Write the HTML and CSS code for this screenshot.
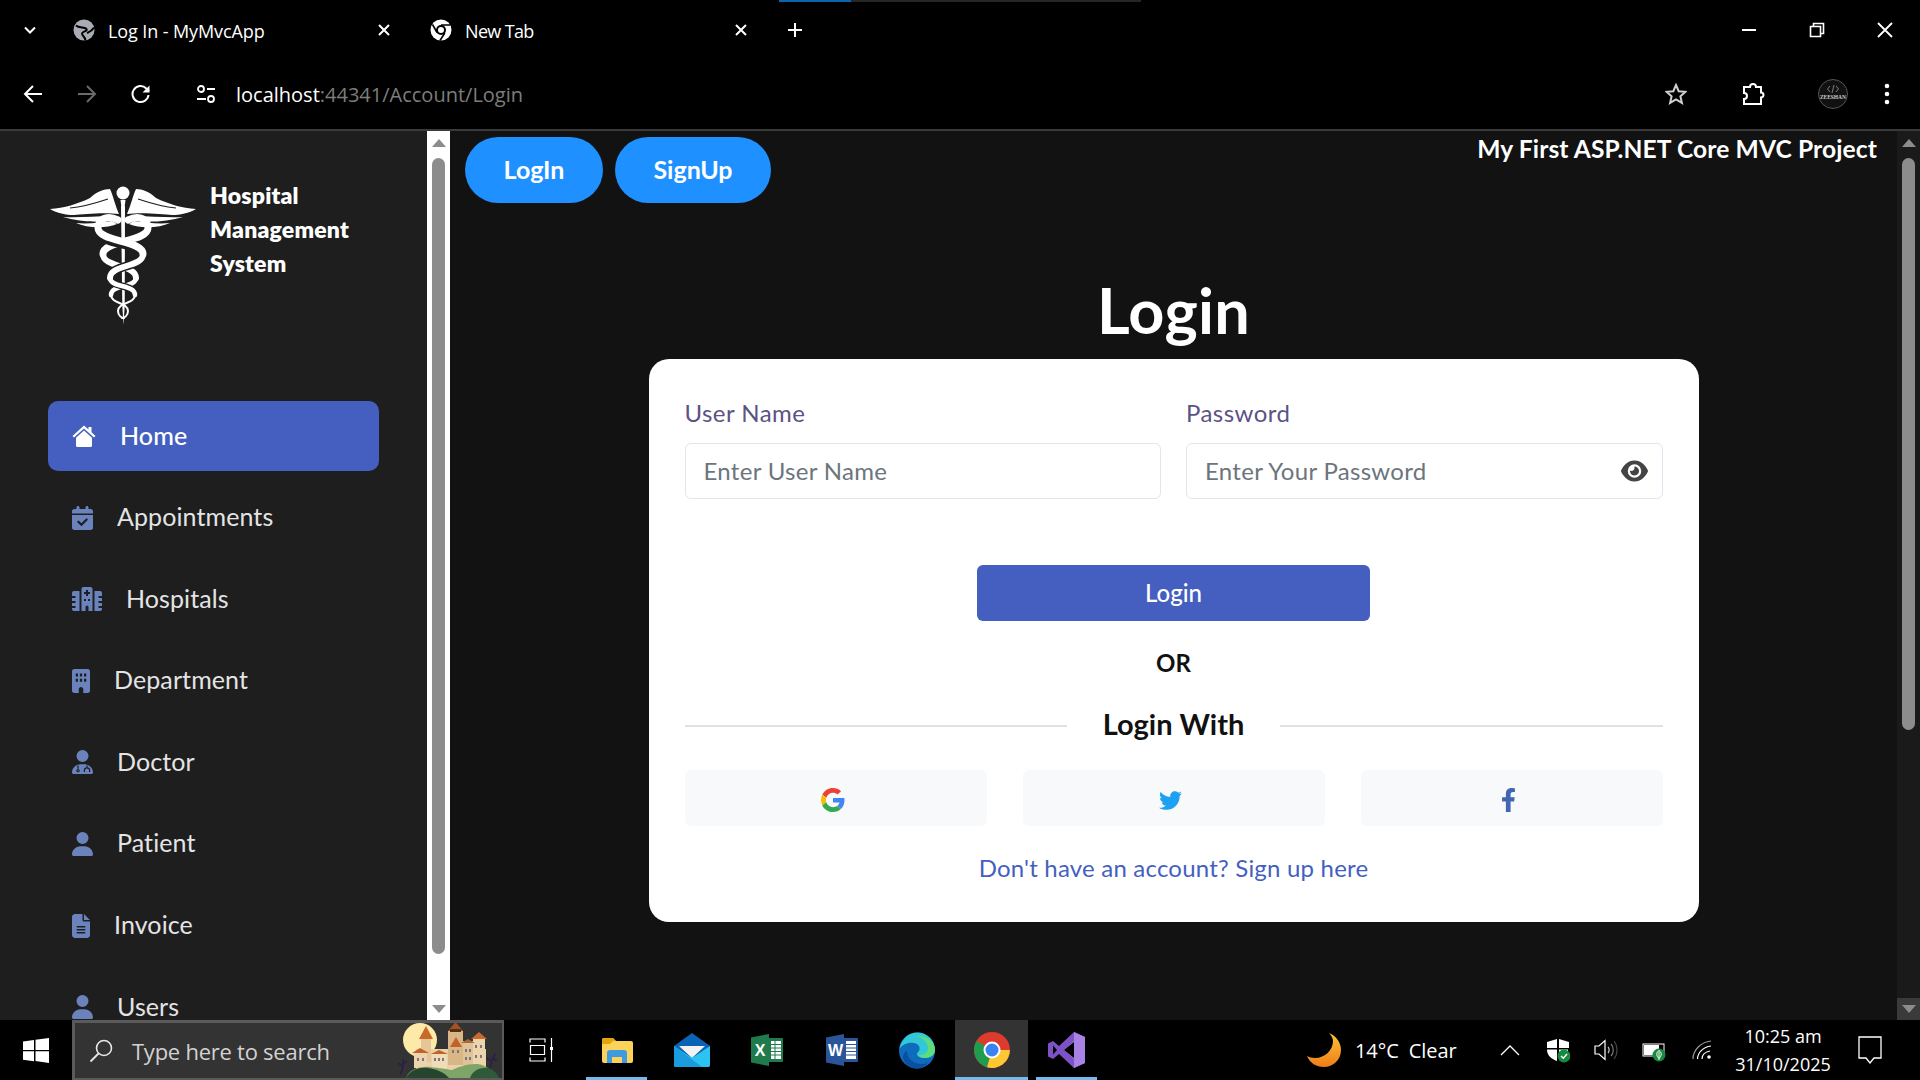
FILE: index.html
```html
<!DOCTYPE html>
<html lang="en">
<head>
<meta charset="utf-8">
<title>Log In - MyMvcApp</title>
<link rel="stylesheet" href="styles.css">
</head>
<body>
<header class="browser">
  <div class="progress"><div class="progress-fill"></div></div>
  <div class="tabstrip">
    <span class="tab-menu"><svg width="14" height="14" viewBox="0 0 14 14"><path d="M2 4.500l5 5 5-5" fill="none" stroke="#fff" stroke-width="2"/></svg></span>
    <div class="tab tab-first">
      <svg class="fav" width="22" height="22" viewBox="0 0 22 22"><circle cx="11" cy="11" r="10.500" fill="#a9adb3"/><path d="M3 6.500c3 3 9 1 10.500 3.500S9 12 9 14.500s3 2.500 3.500 7" fill="none" stroke="#000" stroke-width="2"/><path d="M14 14c2-1 5-2 7-5.500" fill="none" stroke="#000" stroke-width="2"/></svg>
      <span class="tab-title">Log In - MyMvcApp</span>
      <svg class="tab-x" width="14" height="14" viewBox="0 0 14 14"><path d="M2 2l10 10M12 2L2 12" stroke="#fff" stroke-width="2"/></svg>
    </div>
    <div class="tab tab-second">
      <svg class="fav" width="22" height="22" viewBox="0 0 22 22"><circle cx="11" cy="11" r="10.500" fill="#fff"/><circle cx="11" cy="11" r="5" fill="#000"/><circle cx="11" cy="11" r="3" fill="#fff"/><path d="M11 6h9.500M7 13.500L2.500 5.500M14.800 14L10 21.500" stroke="#000" stroke-width="1.600"/></svg>
      <span class="tab-title tab-title-short">New Tab</span>
      <svg class="tab-x" width="14" height="14" viewBox="0 0 14 14"><path d="M2 2l10 10M12 2L2 12" stroke="#fff" stroke-width="2"/></svg>
    </div>
    <svg class="tab-plus" width="16" height="16" viewBox="0 0 16 16"><path d="M8 1v14M1 8h14" stroke="#fff" stroke-width="2"/></svg>
    <div class="win-controls">
      <svg width="16" height="16" viewBox="0 0 16 16"><path d="M1 8h14" stroke="#fff" stroke-width="2"/></svg>
      <svg width="16" height="16" viewBox="0 0 16 16"><path d="M1.500 4.500h10v10h-10zM4.500 4V1.500h10v10H12" fill="none" stroke="#fff" stroke-width="1.600"/></svg>
      <svg width="16" height="16" viewBox="0 0 16 16"><path d="M1 1l14 14M15 1L1 15" stroke="#fff" stroke-width="1.800"/></svg>
    </div>
  </div>
  <div class="toolbar">
    <svg class="tb-back" width="20" height="20" viewBox="0 0 20 20"><path d="M19 10H2M10 2l-8 8 8 8" fill="none" stroke="#fff" stroke-width="2"/></svg>
    <svg class="tb-forward" width="20" height="20" viewBox="0 0 20 20"><path d="M1 10h17M10 2l8 8-8 8" fill="none" stroke="#6a6a6a" stroke-width="2"/></svg>
    <svg class="tb-reload" width="20" height="20" viewBox="0 0 20 20"><path d="M17.500 11a8 8 0 1 1-2.200-6.500L18 7" fill="none" stroke="#fff" stroke-width="2"/><path d="M18.500 1.500v7h-7z" fill="#fff"/></svg>
    <svg class="tb-tune" width="20" height="20" viewBox="0 0 20 20"><circle cx="5" cy="5" r="3" fill="none" stroke="#fff" stroke-width="1.800"/><path d="M11 5h8M1 15h9" stroke="#fff" stroke-width="1.800"/><circle cx="15" cy="15" r="3" fill="none" stroke="#fff" stroke-width="1.800"/></svg>
    <div class="url"><span class="url-host">localhost</span><span class="url-rest">:44341/Account/Login</span></div>
    <div class="tb-right">
      <svg class="tb-star" width="22" height="22" viewBox="0 0 22 22"><path d="M11 2l2.700 6.200 6.800.6-5.100 4.500 1.500 6.600L11 16.400l-5.900 3.500 1.500-6.600L1.500 8.800l6.800-.6z" fill="none" stroke="#cfcfcf" stroke-width="2"/></svg>
      <svg class="tb-ext" width="24" height="24" viewBox="0 0 24 24"><path d="M3 5h6a3 3 0 0 1 6 0h5v5.500a2.500 2.500 0 0 1 0 5V22H3v-5a3 3 0 0 0 0-6z" fill="none" stroke="#fff" stroke-width="2"/></svg>
      <svg class="tb-avatar" width="30" height="30" viewBox="0 0 30 30"><circle cx="15" cy="15" r="14.500" fill="#111" stroke="#555"/><path d="M12 7l-2.500 3 2.500 3M18 7l2.500 3-2.500 3M16 6l-2 8" fill="none" stroke="#999" stroke-width=".8"/><text x="15" y="19.500" text-anchor="middle" textLength="26" class="avatar-text">ZEESHAN</text></svg>
      <svg class="tb-dots" width="6" height="22" viewBox="0 0 6 22"><circle cx="3" cy="3" r="2.300" fill="#fff"/><circle cx="3" cy="11" r="2.300" fill="#fff"/><circle cx="3" cy="19" r="2.300" fill="#fff"/></svg>
    </div>
  </div>
</header>

<div class="page">
  <aside class="sidebar">
    <div class="side-scroll">
      <div class="brand">
        <svg class="brand-logo" width="170" height="165" viewBox="0 0 170 165">
          <g fill="#fff">
            <circle cx="83" cy="23" r="6.500"/>
            <path d="M80.500 30h5l-1 8h-3z"/>
            <path d="M10 39c14-1 28-5 40-11 6-6 14-9 20-9 3 6 5 16 9 25-14-2-36 0-45 1-8 0-17-2-24-6z"/>
            <path d="M10 39c14-1 28-5 40-11 6-6 14-9 20-9 3 6 5 16 9 25-14-2-36 0-45 1-8 0-17-2-24-6z" transform="translate(166 0) scale(-1 1)"/>
            <path d="M23 47c15 1 33-1 48-1l6 4c-15 3-38 2-54-3zM36 53c10 1 24 0 36-2l5 3c-12 5-30 4-41-1z"/>
            <path d="M23 47c15 1 33-1 48-1l6 4c-15 3-38 2-54-3zM36 53c10 1 24 0 36-2l5 3c-12 5-30 4-41-1z" transform="translate(166 0) scale(-1 1)"/>
            <path d="M81 36h4l-.3 100-1.200 19-1.200-19z"/>
          </g>
          <g fill="none" stroke="#1e1e1e" stroke-width="1.200">
            <path d="M30 38c12-1 26-5 38-9"/>
            <path d="M30 38c12-1 26-5 38-9" transform="translate(166 0) scale(-1 1)"/>
          </g>
          <g fill="none" stroke="#fff" stroke-linecap="round">
            <g transform="translate(166 0) scale(-1 1)">
              <path stroke-width="7" d="M78 50C66 44 58 50 58 58c0 14 45 12 45 26"/>
              <path stroke-width="6" d="M103 84c0 14-33 10-33 24"/>
              <path stroke-width="4.500" d="M70 108c0 10 25 6 25 17"/>
              <path stroke-width="2" d="M95 125c0 9-17 7-17 16 0 5 4 7 6 7"/>
            </g>
          </g>
          <g fill="none" stroke="#1e1e1e" stroke-linecap="round">
            <path stroke-width="10" d="M62 66c7 8 41 8 41 18"/>
            <path stroke-width="9" d="M103 84c0 14-33 10-33 24"/>
            <path stroke-width="7" d="M70 108c0 10 25 6 25 17"/>
          </g>
          <g fill="none" stroke="#fff" stroke-linecap="round">
            <path stroke-width="7" d="M78 50C66 44 58 50 58 58c0 14 45 12 45 26"/>
            <path stroke-width="6" d="M103 84c0 14-33 10-33 24"/>
            <path stroke-width="4.500" d="M70 108c0 10 25 6 25 17"/>
            <path stroke-width="2" d="M95 125c0 9-17 7-17 16 0 5 4 7 6 7"/>
          </g>
        </svg>
        <div class="brand-name">Hospital<br>Management<br>System</div>
      </div>
      <nav class="nav">
        <a class="nav-item active"><svg class="ico ico-home" width="24" height="24" viewBox="0 0 24 24"><path d="M12 1.500L.5 12 2 13.500l10-9 10 9 1.500-1.500-4-3.700V3h-3v2.500z" fill="#fff"/><path d="M12 6.500L4 13.700v7.800A1.500 1.500 0 0 0 5.500 23h13a1.500 1.500 0 0 0 1.500-1.500v-7.800z" fill="#fff"/></svg><span class="nav-label">Home</span></a>
        <a class="nav-item"><svg class="ico" width="21" height="24" viewBox="0 0 448 512"><path d="M128 0c17.700 0 32 14.300 32 32V64H288V32c0-17.700 14.300-32 32-32s32 14.300 32 32V64h48c26.500 0 48 21.500 48 48v48H0V112C0 85.500 21.500 64 48 64H96V32c0-17.700 14.300-32 32-32zM0 192H448V464c0 26.500-21.500 48-48 48H48c-26.500 0-48-21.500-48-48V192zM329 305c9.400-9.400 9.400-24.600 0-33.900s-24.600-9.400-33.900 0l-95 95-47-47c-9.400-9.400-24.600-9.400-33.900 0s-9.400 24.600 0 33.900l64 64c9.400 9.400 24.600 9.400 33.900 0L329 305z"/></svg><span class="nav-label">Appointments</span></a>
        <a class="nav-item"><svg class="ico" width="30" height="24" viewBox="0 0 30 24"><path fill-rule="evenodd" d="M9.500 2a2 2 0 0 1 2-2h7a2 2 0 0 1 2 2v22h-4v-4a1.500 1.500 0 0 0-3 0v4h-4zM14 3v2h-2v2h2v2h2V7h2V5h-2V3zM12 12v2h2v-2zM16 12v2h2v-2z"/><path fill-rule="evenodd" d="M7.500 4v20H2a2 2 0 0 1-2-2V6a2 2 0 0 1 2-2zM0 9v2h3.500V9zM0 14v2h3.500v-2zM0 19v2h3.500v-2z"/><path fill-rule="evenodd" d="M22.500 4H28a2 2 0 0 1 2 2v16a2 2 0 0 1-2 2h-5.500zM26.500 9v2H30V9zM26.500 14v2H30v-2zM26.500 19v2H30v-2z"/></svg><span class="nav-label">Hospitals</span></a>
        <a class="nav-item"><svg class="ico" width="18" height="24" viewBox="0 0 384 512"><path fill-rule="evenodd" d="M48 0C21.500 0 0 21.500 0 48V464c0 26.500 21.500 48 48 48h96V432c0-26.500 21.500-48 48-48s48 21.500 48 48v80h96c26.500 0 48-21.500 48-48V48c0-26.500-21.500-48-48-48zM80 96v64h48V96zM168 96v64h48V96zM256 96v64h48V96zM80 208v64h48v-64zM168 208v64h48v-64zM256 208v64h48v-64z"/></svg><span class="nav-label">Department</span></a>
        <a class="nav-item"><svg class="ico" width="21" height="24" viewBox="0 0 448 512"><path d="M224 256A128 128 0 1 0 224 0a128 128 0 1 0 0 256zm-45.700 48C79.800 304 0 383.800 0 482.300C0 498.700 13.300 512 29.700 512H418.300c16.400 0 29.700-13.300 29.700-29.700C448 383.800 368.200 304 269.700 304H178.300z"/><path d="M128 330v70M104 440a24 24 0 1 0 48 0 24 24 0 1 0-48 0zM320 330v50M264 470v-40a56 50 0 0 1 112 0v40" fill="none" stroke="#1e1e1e" stroke-width="26"/></svg><span class="nav-label">Doctor</span></a>
        <a class="nav-item"><svg class="ico" width="21" height="24" viewBox="0 0 448 512"><path d="M224 256A128 128 0 1 0 224 0a128 128 0 1 0 0 256zm-45.700 48C79.800 304 0 383.800 0 482.300C0 498.700 13.300 512 29.700 512H418.300c16.400 0 29.700-13.300 29.700-29.700C448 383.800 368.200 304 269.700 304H178.300z"/></svg><span class="nav-label">Patient</span></a>
        <a class="nav-item"><svg class="ico" width="18" height="24" viewBox="0 0 384 512"><path d="M64 0C28.700 0 0 28.700 0 64V448c0 35.300 28.700 64 64 64H320c35.300 0 64-28.700 64-64V160H256c-17.700 0-32-14.300-32-32V0H64zM256 0V128H384L256 0zM112 256H272c8.800 0 16 7.200 16 16s-7.200 16-16 16H112c-8.800 0-16-7.200-16-16s7.200-16 16-16zm0 64H272c8.800 0 16 7.200 16 16s-7.200 16-16 16H112c-8.800 0-16-7.200-16-16s7.200-16 16-16zm0 64H272c8.800 0 16 7.200 16 16s-7.200 16-16 16H112c-8.800 0-16-7.200-16-16s7.200-16 16-16z"/></svg><span class="nav-label">Invoice</span></a>
        <a class="nav-item"><svg class="ico" width="21" height="24" viewBox="0 0 448 512"><path d="M224 256A128 128 0 1 0 224 0a128 128 0 1 0 0 256zm-45.700 48C79.800 304 0 383.800 0 482.300C0 498.700 13.300 512 29.700 512H418.300c16.400 0 29.700-13.300 29.700-29.700C448 383.800 368.200 304 269.700 304H178.300z"/></svg><span class="nav-label">Users</span></a>
      </nav>
    </div>
    <div class="scrollbar scrollbar-light">
      <span class="arrow-up"></span>
      <span class="thumb thumb-side"></span>
      <span class="arrow-down"></span>
    </div>
  </aside>

  <main class="main">
    <div class="topbar">
      <div class="auth-buttons">
        <a class="pill pill-login">LogIn</a>
        <a class="pill pill-signup">SignUp</a>
      </div>
      <div class="project">My First ASP.NET Core MVC Project</div>
    </div>
    <h1 class="login-title">Login</h1>
    <section class="card">
      <div class="fields">
        <div class="field">
          <label class="label">User Name</label>
          <div class="input"><span class="placeholder">Enter User Name</span></div>
        </div>
        <div class="field">
          <label class="label">Password</label>
          <div class="input"><span class="placeholder">Enter Your Password</span>
            <svg class="eye" width="27" height="24" viewBox="0 0 576 512"><path fill="#444" d="M288 32c-80.800 0-145.500 36.800-192.600 80.600C48.600 156 17.300 208 2.500 243.700c-3.300 7.900-3.300 16.700 0 24.600C17.300 304 48.600 356 95.400 399.400C142.500 443.200 207.200 480 288 480s145.500-36.800 192.600-80.600c46.800-43.500 78.100-95.400 93-131.100c3.300-7.900 3.300-16.700 0-24.600c-14.900-35.700-46.200-87.700-93-131.100C433.500 68.800 368.800 32 288 32zM144 256a144 144 0 1 1 288 0 144 144 0 1 1 -288 0zm144-64c0 35.300-28.700 64-64 64c-7.100 0-13.900-1.200-20.300-3.300c-5.500-1.800-11.900 1.600-11.700 7.400c.3 6.900 1.300 13.800 3.200 20.700c13.700 51.200 66.400 81.600 117.600 67.900s81.600-66.400 67.900-117.600c-11.100-41.500-47.800-69.400-88.600-71.100c-5.800-.2-9.200 6.100-7.400 11.700c2.100 6.400 3.300 13.200 3.300 20.300z"/></svg>
          </div>
        </div>
      </div>
      <button class="submit">Login</button>
      <div class="or">OR</div>
      <div class="divider"><span class="rule"></span><span class="divider-text">Login With</span><span class="rule"></span></div>
      <div class="socials">
        <a class="social"><svg width="24" height="24" viewBox="0 0 48 48"><path fill="#EA4335" d="M24 9.500c3.540 0 6.710 1.220 9.210 3.600l6.850-6.850C35.900 2.380 30.470 0 24 0 14.620 0 6.510 5.380 2.560 13.220l7.980 6.190C12.430 13.720 17.740 9.500 24 9.500z"/><path fill="#4285F4" d="M46.980 24.550c0-1.570-.15-3.090-.38-4.550H24v9.020h12.940c-.58 2.960-2.260 5.480-4.780 7.180l7.730 6c4.510-4.180 7.090-10.360 7.090-17.650z"/><path fill="#FBBC05" d="M10.530 28.590c-.48-1.450-.76-2.990-.76-4.590s.27-3.140.76-4.590l-7.980-6.190C.92 16.460 0 20.120 0 24c0 3.880.92 7.540 2.560 10.780l7.970-6.190z"/><path fill="#34A853" d="M24 48c6.480 0 11.930-2.130 15.890-5.810l-7.730-6c-2.150 1.450-4.920 2.300-8.160 2.300-6.260 0-11.570-4.220-13.470-9.910l-7.980 6.190C6.510 42.620 14.620 48 24 48z"/></svg></a>
        <a class="social"><svg width="23" height="23" viewBox="0 0 512 512"><path fill="#1da1f2" d="M459.370 151.716c.325 4.548.325 9.097.325 13.645 0 138.720-105.583 298.558-298.558 298.558-59.452 0-114.680-17.219-161.137-47.106 8.447.974 16.568 1.299 25.340 1.299 49.055 0 94.213-16.568 130.274-44.832-46.132-.975-84.792-31.188-98.112-72.772 6.498.974 12.995 1.624 19.818 1.624 9.421 0 18.843-1.300 27.614-3.573-48.081-9.747-84.143-51.980-84.143-102.985v-1.299c13.969 7.797 30.214 12.670 47.431 13.319-28.264-18.843-46.781-51.005-46.781-87.391 0-19.492 5.197-37.360 14.294-52.954 51.655 63.675 129.300 105.258 216.365 109.807-1.624-7.797-2.599-15.918-2.599-24.040 0-57.828 46.782-104.934 104.934-104.934 30.213 0 57.502 12.670 76.670 33.137 23.715-4.548 46.456-13.320 66.599-25.340-7.798 24.366-24.366 44.833-46.132 57.827 21.117-2.273 41.584-8.122 60.426-16.243-14.292 20.791-32.161 39.308-52.628 54.253z"/></svg></a>
        <a class="social"><svg width="15" height="24" viewBox="0 0 320 512"><path fill="#4267b2" d="M279.140 288l14.220-92.660h-88.910v-60.130c0-25.350 12.420-50.060 52.240-50.060h40.420V6.260S260.430 0 225.360 0c-73.220 0-121.080 44.380-121.080 124.720v70.620H22.890V288h81.390v224h100.170V288z"/></svg></a>
      </div>
      <a class="signup-link">Don't have an account? Sign up here</a>
    </section>
  </main>

  <div class="scrollbar scrollbar-dark">
    <span class="arrow-up"></span>
    <span class="thumb thumb-main"></span>
    <span class="arrow-tile"><span class="arrow-down"></span></span>
  </div>
</div>

<footer class="taskbar">
  <div class="start"><svg width="26" height="25" viewBox="0 0 26 25"><path d="M0 3.600L11 2v10H0zM12.500 1.800L26 0v12H12.500zM0 13.300h11v10L0 21.700zM12.500 13.300H26V25l-13.500-1.900z" fill="#fff"/></svg></div>
  <div class="search">
    <svg class="search-ico" width="24" height="24" viewBox="0 0 24 24"><circle cx="15" cy="9" r="7.500" fill="none" stroke="#e8e8e8" stroke-width="1.600"/><path d="M9.500 14.500L1.500 22.500" stroke="#e8e8e8" stroke-width="1.800"/></svg>
    <span class="search-text">Type here to search</span>
    <svg class="castle" width="104" height="56" viewBox="0 0 104 56">
      <circle cx="22" cy="18" r="17" fill="#fdeaa8"/>
      <path d="M2 52c3-4 4-9 3-15M4 44l-4-3M4 42l5-3" stroke="#2c1c4a" stroke-width="1.500" fill="none"/>
      <path d="M92 46c1-6 2-9 5-14M93 39l-6-4M95 37l4 1" stroke="#2c1c4a" stroke-width="1.500" fill="none"/>
      <rect x="18" y="27" width="70" height="22" fill="#e9d2a9"/>
      <rect x="23" y="16" width="10" height="24" fill="#e6c596"/>
      <path d="M21 17L28 4l7 13z" fill="#c96a2c"/>
      <rect x="50" y="9" width="15" height="34" fill="#d9b685"/>
      <path d="M50 9l7.500-9L65 9z" fill="#a8501f"/>
      <rect x="52" y="7" width="11" height="3" fill="#4f3219"/>
      <path d="M52 25l6-10 6 10z" fill="#c2622a"/>
      <rect x="75" y="17" width="12" height="30" fill="#ecd5ad"/>
      <path d="M73 17l8-7 8 7z" fill="#c96a2c"/>
      <rect x="65" y="19" width="10" height="26" fill="#e0c498"/>
      <path d="M63 21l7-4 7 4z" fill="#a9683a"/>
      <path d="M14 31l8-5 9 5zM33 32l8-4 9 4z" fill="#c2622a"/>
      <rect x="16" y="31" width="13" height="15" fill="#ecd5ad"/>
      <rect x="34" y="32" width="15" height="14" fill="#f0dcb6"/>
      <g fill="#7f7484"><rect x="19" y="36" width="2" height="3"/><rect x="24" y="36" width="2" height="3"/><rect x="36" y="36" width="2" height="3"/><rect x="40" y="36" width="2" height="3"/><rect x="44" y="36" width="2" height="3"/><rect x="54" y="28" width="2" height="3"/><rect x="59" y="28" width="2" height="3"/><rect x="67" y="27" width="2" height="3"/><rect x="71" y="27" width="2" height="3"/><rect x="67" y="35" width="2" height="3"/><rect x="71" y="35" width="2" height="3"/><rect x="77" y="23" width="2" height="3"/><rect x="82" y="23" width="2" height="3"/><rect x="77" y="33" width="2" height="3"/><rect x="82" y="33" width="2" height="3"/></g>
      <path d="M8 56c3-8 12-12 24-11 10 1 16 2 22 3 8-4 22-8 30-5 6 2 12 7 16 13z" fill="#7fa468"/>
      <path d="M8 56c3-6 10-11 22-10 8 1 16 4 21 10z" fill="#27452e"/>
      <path d="M72 56c2-7 10-11 18-10 6 2 9 5 11 10z" fill="#2f5a39"/>
    </svg>
  </div>
  <div class="slot">
    <svg width="25" height="24" viewBox="0 0 25 24"><path d="M1 4.500V1h15v3.500M1 19.500V23h15v-3.500M1.500 7.500h14v9h-14zM22.500 0v24" fill="none" stroke="#fff" stroke-width="1.200"/><rect x="21" y="9" width="3" height="3" fill="#fff"/></svg>
  </div>
  <div class="slot slot-open">
    <svg width="32" height="26" viewBox="0 0 32 26"><path d="M1 3a2 2 0 0 1 2-2h9l3 3h15a2 2 0 0 1 2 2v18a2 2 0 0 1-2 2H3a2 2 0 0 1-2-2z" fill="#fbd35a"/><path d="M1 3a2 2 0 0 1 2-2h9l3 3h-3L9 7H1z" fill="#e3a40e"/><path d="M6 26V16a3 3 0 0 1 3-3h14a3 3 0 0 1 3 3v10h-5v-6H11v6z" fill="#3f9be0"/></svg>
  </div>
  <div class="slot">
    <svg width="36" height="34" viewBox="0 0 36 34"><path d="M0 13L18 0l18 13v19a2 2 0 0 1-2 2H2a2 2 0 0 1-2-2z" fill="#0b63b6"/><path d="M5 13h26L18 25z" fill="#f3f3f3"/><path d="M0 13l18 12 18-12v19a2 2 0 0 1-2 2H2a2 2 0 0 1-2-2z" fill="#2cc3f2"/><path d="M0 13l28 21H2a2 2 0 0 1-2-2z" fill="#1a9be0"/></svg>
  </div>
  <div class="slot">
    <svg width="32" height="32" viewBox="0 0 32 32"><path d="M0 3.500L18 0v32L0 28.500z" fill="#1f7a4c"/><path d="M18 4h13a1 1 0 0 1 1 1v22a1 1 0 0 1-1 1H18z" fill="#1f7a4c"/><path d="M20 7h10v18H20z" fill="#fff"/><path d="M20 10.500h10M20 14h10M20 17.500h10M20 21h10M24 7v18" stroke="#1f7a4c"/><text x="9" y="22" text-anchor="middle" class="app-letter">X</text></svg>
  </div>
  <div class="slot">
    <svg width="32" height="32" viewBox="0 0 32 32"><path d="M0 3.500L18 0v32L0 28.500z" fill="#2a5699"/><path d="M18 4h13a1 1 0 0 1 1 1v22a1 1 0 0 1-1 1H18z" fill="#2a5699"/><path d="M20 7h10v18H20z" fill="#fff"/><path d="M20 10.500h10M20 14h10M20 17.500h10M20 21h10" stroke="#2a5699" stroke-width="1.200"/><text x="9.500" y="22" text-anchor="middle" class="app-letter">W</text></svg>
  </div>
  <div class="slot">
    <svg width="38" height="37" viewBox="0 0 38 37"><circle cx="19" cy="18.500" r="18" fill="#0f6cbd"/><path d="M1.500 17C3 7 11 .5 19.500.5 29 .5 37 8 37 18c0 5-5 8-10 8-5 0-8-2-8-4 0-1 1-2 2-3 1-2 1-5-2-7-6-3-15 0-17.500 5z" fill="#32c8d8"/><path d="M37 18c0 5-5 8-10 8-3 0-6-1-7-3 5 1 10-2 10-7 0-6-6-11-12-12 10-1 19 5 19 14z" fill="#5fdc7c"/><path d="M9 19c0 8 7 13 14 13 3 0 5-.5 7-1.500-3 4-7 6-11 6-7 0-13-5-14-11 0-3 2-6 4-6.500z" fill="#0a4fa0"/></svg>
  </div>
  <div class="slot slot-active">
    <svg width="36" height="36" viewBox="0 0 36 36"><circle cx="18" cy="18" r="18" fill="#de3b2f"/><path d="M18 18L2.500 9A18 18 0 0 0 13 35.300z" fill="#1f9d4f"/><path d="M18 18h17.900A18 18 0 0 1 13 35.300z" fill="#fcc934"/><circle cx="18" cy="18" r="8.500" fill="#fff"/><circle cx="18" cy="18" r="6.500" fill="#3b84f0"/></svg>
  </div>
  <div class="slot slot-open">
    <svg width="37" height="36" viewBox="0 0 37 36"><path d="M26 0l11 5v26l-11 5-15-14-6 5-5-2.500v-13L5 9l6 5z" fill="#7c52c6"/><path d="M26 0l11 5v26l-11 5zM26 9L16 18l10 9z" fill="#a982e6"/><path d="M5 13.500L9 18l-4 4.500z" fill="#000"/><path d="M26 10l-10 8 10 8z" fill="#000"/></svg>
  </div>
  <div class="tray">
    <div class="weather">
      <svg width="34" height="34" viewBox="0 0 34 34"><defs><linearGradient id="moonfill" x1="0" y1="0" x2="0" y2="1"><stop offset="0" stop-color="#fbc33a"/><stop offset="1" stop-color="#ee7d18"/></linearGradient></defs><path d="M22 0c7 3 12 9 12 17 0 10-8 17-17 17C9 34 3 30 0 23c2 1 5 2 8 2 10 0 18-8 18-17 0-3-2-6-4-8z" fill="url(#moonfill)"/></svg>
      <span class="weather-text">14°C&nbsp;&nbsp;Clear</span>
    </div>
    <div class="tray-slot"><svg width="20" height="12" viewBox="0 0 20 12"><path d="M1 11l9-9 9 9" fill="none" stroke="#fff" stroke-width="1.300"/></svg></div>
    <div class="tray-slot">
      <svg width="24" height="28" viewBox="0 0 24 28"><path d="M11 3L1 6v6h10zM1 13.500h10V25C6 23 1 20 1 13.500zM13 3l10 3v6H13zM13 13.500h9V18h-9z" fill="#fff"/><circle cx="18" cy="20" r="6.500" fill="#168a3e"/><path d="M15 20l2.300 2.300 3.700-4.300" fill="none" stroke="#fff" stroke-width="1.400"/></svg>
    </div>
    <div class="tray-slot">
      <svg width="24" height="22" viewBox="0 0 24 22"><path d="M1 7h4l6-5.500v19L5 15H1z" fill="none" stroke="#fff" stroke-width="1.200"/><path d="M14 8c1.500 1.500 1.500 4.500 0 6" fill="none" stroke="#ccc" stroke-width="1.200"/><path d="M17 5c3 3 3 9 0 12" fill="none" stroke="#777" stroke-width="1.200"/><path d="M20 2c4 5 4 13 0 18" fill="none" stroke="#444" stroke-width="1.200"/></svg>
    </div>
    <div class="tray-slot">
      <svg width="24" height="24" viewBox="0 0 24 24"><rect x="1" y="6" width="21" height="12" fill="none" stroke="#fff"/><rect x="2" y="7" width="15" height="10" fill="#fff"/><circle cx="17" cy="17" r="6.500" fill="#168a3e"/><path d="M17 12.500c-3 2-3 5 0 8 3-3 3-6 0-8zM17 14v8" fill="none" stroke="#fff"/></svg>
    </div>
    <div class="tray-slot">
      <svg width="20" height="20" viewBox="0 0 20 20"><path d="M1 19C1 10 9 2 19 1" fill="none" stroke="#999" stroke-width="1.200"/><path d="M5.500 19C5.500 13 11 7 19 6" fill="none" stroke="#fff" stroke-width="1.200"/><path d="M10 19c0-4 3-7 8-8" fill="none" stroke="#fff" stroke-width="1.200"/><circle cx="17" cy="17" r="1.800" fill="#fff"/></svg>
    </div>
    <div class="clock"><span>10:25 am</span><span>31/10/2025</span></div>
    <div class="notify"><svg width="24" height="28" viewBox="0 0 24 28"><path d="M1 1h22v21h-7l-4 5-4-5H1z" fill="none" stroke="#fff" stroke-width="1.300"/></svg></div>
  </div>
</footer>
</body>
</html>
```

FILE: styles.css
```css
* { box-sizing: border-box; }
html, body { height: 100%; }
body {
  margin: 0;
  width: 1920px;
  height: 1080px;
  overflow: hidden;
  display: flex;
  flex-direction: column;
  background: #000;
  font-family: "Lato", "Open Sans", sans-serif;
}

/* browser chrome */
.browser {
  height: 131px;
  flex: none;
  background: #000;
  border-bottom: 2px solid #3a3a3a;
  font-family: "Open Sans", "Noto Sans", sans-serif;
  color: #fff;
}
.progress { height: 2px; width: 362px; margin-left: 779px; background: #262626; }
.progress-fill { height: 2px; width: 72px; background: #0a64b0; }
.tabstrip { height: 56px; display: flex; align-items: center; padding-left: 23px; }
.tab-menu { width: 14px; height: 14px; display: flex; margin-right: 36px; }
.tab { display: flex; align-items: center; height: 56px; }
.tab-first { width: 357px; }
.tab-second { width: 318px; }
.tab-title { font-size: 18px; margin: 2px 0 0 13px; flex: 1; letter-spacing: -.1px; }
.tab-title-short { letter-spacing: -.65px; }
.tab-first .tab-x { margin-right: 39px; }
.tab-second .tab-x { margin-right: 0; }
.tab-plus { margin-left: 39px; }
.win-controls { margin-left: auto; display: flex; align-items: center; gap: 52px; margin-right: 27px; }
.toolbar { height: 72px; display: flex; align-items: center; padding-left: 23px; }
.tb-forward { margin-left: 34px; }
.tb-reload { margin-left: 34px; }
.tb-tune { margin-left: 45px; }
.url { margin-left: 20px; font-size: 20px; white-space: nowrap; }
.url-host { color: #fff; }
.url-rest { color: #7d7d7d; }
.tb-right { margin-left: auto; display: flex; align-items: center; margin-right: 30px; }
.tb-star { margin-right: -1px; }
.tb-ext { margin-left: 55px; }
.tb-avatar { margin-left: 53px; }
.tb-dots { margin-left: 36px; }
.avatar-text { font-family: "Liberation Serif", serif; font-size: 5.5px; font-weight: 700; fill: #ccc; }

/* page */
.page { flex: 1; min-height: 0; display: flex; background: #121212; }
.sidebar { width: 450px; flex: none; display: flex; background: #1e1e1e; overflow: hidden; }
.side-scroll { width: 427px; flex: none; padding: 49px 0 0 48px; overflow: hidden; }
.brand { display: flex; height: 231px; margin-left: -8px; margin-top: -10px; }
.brand-logo { flex: none; }
.brand-name { margin: 8px 0 0 0; font-size: 23px; font-weight: 800; line-height: 34px; color: #fff; letter-spacing: .2px; }
.nav { width: 331px; }
.nav-item {
  display: flex;
  align-items: center;
  gap: 24px;
  height: 70px;
  margin-bottom: 11.6px;
  padding-left: 24px;
  border-radius: 10px;
  font-size: 25px;
  color: #e4e4e4;
  letter-spacing: .1px;
}
.nav-label { margin-top: -3px; }
.nav-item.active { background: #445fbf; color: #fff; font-weight: 500; }
.ico { flex: none; fill: #6b83bd; }

/* scrollbars */
.scrollbar { width: 23px; flex: none; display: flex; flex-direction: column; align-items: center; }
.scrollbar-light { background: #fff; }
.scrollbar-dark { background: #1a1a1a; }
.arrow-up, .arrow-down { display: block; width: 0; height: 0; border-left: 7.5px solid transparent; border-right: 7.5px solid transparent; }
.arrow-up { border-bottom: 8px solid #8c8c8c; margin-top: 8px; }
.arrow-down { border-top: 8px solid #8c8c8c; }
.thumb { display: block; width: 13px; border-radius: 7px; background: #8c8c8c; margin-top: 11px; }
.thumb-side { height: 796px; margin-bottom: auto; }
.thumb-main { height: 572px; margin-bottom: auto; }
.scrollbar-light .arrow-down { margin-bottom: 7px; }
.arrow-tile { width: 23px; height: 22px; background: #3a3a3a; display: flex; justify-content: center; align-items: center; }

/* main */
.main { flex: 1; min-width: 0; padding-top: 6px; display: flex; flex-direction: column; align-items: center; }
.topbar { align-self: stretch; margin: 0 20px 0 15px; display: flex; justify-content: space-between; align-items: flex-start; }
.auth-buttons { display: flex; gap: 12px; }
.pill {
  display: flex;
  align-items: center;
  justify-content: center;
  height: 66px;
  padding-bottom: 2px;
  border-radius: 33px;
  background: #1e90ff;
  color: #fff;
  font-size: 25px;
  font-weight: 700;
}
.pill-login { width: 138px; }
.pill-signup { width: 156px; }
.project { font-size: 24.6px; font-weight: 700; line-height: 30px; color: #fff; margin-top: -3px; letter-spacing: .1px; }
.login-title { margin: 67px 0 0; font-size: 63px; font-weight: 700; line-height: 80px; color: #fff; letter-spacing: .2px; height: 89px; }
.card {
  width: 1050px;
  height: 563px;
  background: #fff;
  border-radius: 20px;
  padding: 36px;
  display: flex;
  flex-direction: column;
  align-items: center;
}
.fields { align-self: stretch; display: flex; gap: 25px; }
.field { flex: 1; }
.label { display: block; height: 48px; font-size: 24px; line-height: 35px; color: #5b5285; letter-spacing: .45px; }
.input {
  height: 56px;
  display: flex;
  align-items: center;
  justify-content: space-between;
  padding: 0 14px 0 18px;
  border: 1px solid #dfe6ee;
  border-radius: 6px;
}
.placeholder { margin-top: -2px; font-size: 24px; color: #6c757d; letter-spacing: .3px; }
.eye { flex: none; }
.submit {
  display: block;
  width: 393px;
  height: 56px;
  margin-top: 66px;
  padding-bottom: 2px;
  border: 0;
  border-radius: 6px;
  background: #445fbf;
  color: #fff;
  font: 500 24px "Lato", sans-serif;
}
.or { margin-top: 25px; height: 36px; font-size: 24px; font-weight: 700; line-height: 34px; color: #111; }
.divider { align-self: stretch; margin-top: 19px; height: 44px; display: flex; align-items: center; gap: 36px; }
.rule { flex: 1; height: 2px; margin-top: 5px; background: #dee2e6; }
.divider-text { font-size: 29px; font-weight: 700; color: #111; }
.socials { align-self: stretch; margin-top: 25px; display: flex; gap: 36px; }
.social { flex: 1; height: 56px; border-radius: 6px; background: #f8f9fa; display: flex; align-items: center; justify-content: center; padding: 4px 6px 0 0; }
.signup-link { margin-top: 24px; font-size: 24px; line-height: 36px; color: #445fbf; letter-spacing: .2px; }

/* taskbar */
.taskbar { height: 60px; flex: none; display: flex; align-items: stretch; background: #000; color: #fff; font-family: "Open Sans", "Noto Sans", sans-serif; }
.start { width: 72px; display: flex; align-items: center; justify-content: center; padding-right: 1px; }
.search {
  width: 432px;
  display: flex;
  align-items: center;
  background: #333;
  border: 3px solid #5a5a5a;
  border-bottom-width: 2px;
  border-right-width: 2px;
  overflow: hidden;
}
.search-ico { margin-left: 14px; flex: none; }
.search-text { margin-left: 19px; font-size: 22px; color: #d2d2d2; letter-spacing: -.25px; }
.castle { margin-left: auto; flex: none; align-self: flex-end; }
.slot { width: 75px; display: flex; align-items: center; justify-content: center; position: relative; }
.slot-open::after, .slot-active::after { content: ""; position: absolute; bottom: 0; height: 3px; background: #76b9ed; }
.slot-open::after { left: 7px; right: 7px; }
.slot-active { background: #333; width: 73px; margin: 0 1px; }
.slot-active::after { left: 0; right: 0; }
.app-letter { font-family: "Liberation Sans", sans-serif; font-size: 16px; font-weight: 700; fill: #fff; }
.tray { margin-left: auto; display: flex; align-items: center; padding-right: 20px; }
.weather { width: 179px; display: flex; align-items: center; gap: 14px; }
.weather-text { font-size: 20px; white-space: nowrap; letter-spacing: -.1px; }
.tray-slot { width: 48px; display: flex; align-items: center; justify-content: center; }
.clock { width: 114px; display: flex; flex-direction: column; align-items: center; gap: 5px; font-size: 18px; line-height: 23px; }
.notify { width: 60px; display: flex; align-items: center; justify-content: center; }
```
